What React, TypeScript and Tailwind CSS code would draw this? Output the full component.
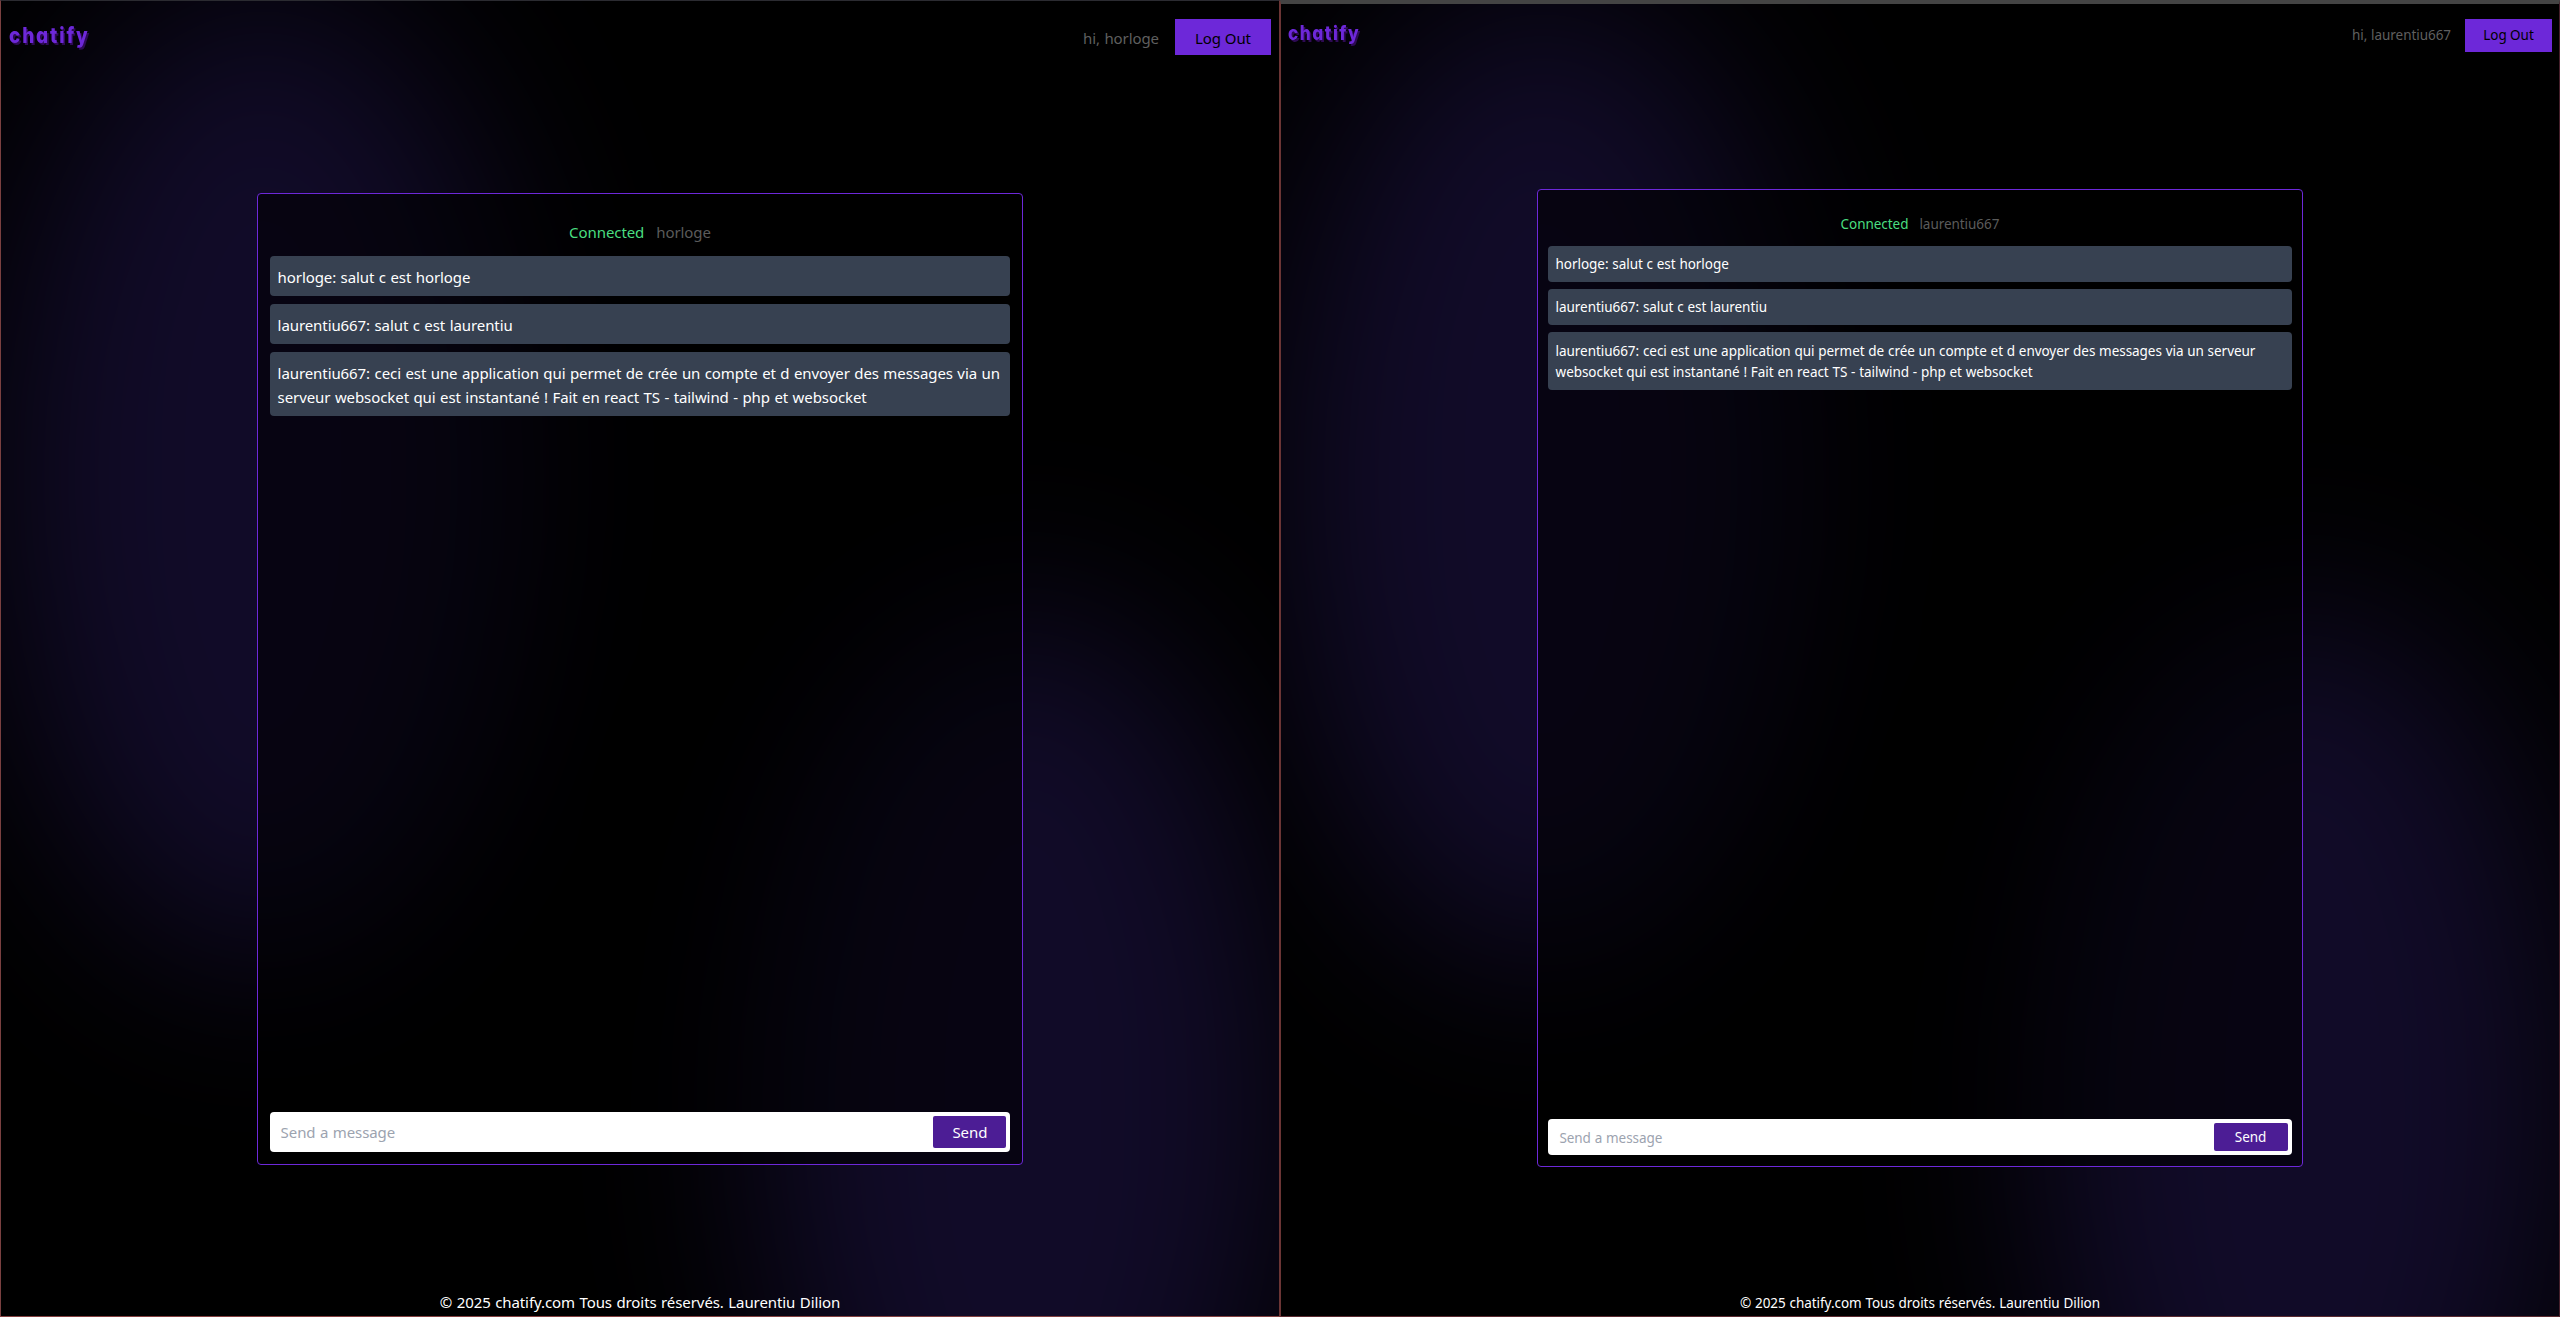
import React from "react";
import clsx from "clsx";

type Message = { author: string; text: string };

const messages: Message[] = [
  { author: "horloge", text: "salut c est horloge" },
  { author: "laurentiu667", text: "salut c est laurentiu" },
  {
    author: "laurentiu667",
    text: "ceci est une application qui permet de crée un compte et d envoyer des messages via un serveur websocket qui est instantané ! Fait en react TS - tailwind - php et websocket",
  },
];

// Two blurred ellipses that glow behind the page content.
function Glow() {
  return (
    <div className="pointer-events-none absolute inset-0 -z-10 overflow-hidden bg-black">
      <div className="absolute top-[-15px] left-0 h-[980px] w-[41%] rounded-[50%] bg-[#110b28] blur-[90px]" />
      <div className="absolute top-[605px] left-[59.5%] h-[1000px] w-[41%] rounded-[50%] bg-[#110b28] blur-[90px]" />
    </div>
  );
}

function ChatWindow({ user, compact = false }: { user: string; compact?: boolean }) {
  return (
    <section
      className={clsx(
        "relative isolate flex h-full w-[1280px] flex-col border",
        compact
          ? "border-t-4 border-t-[#444444] border-r-[#451f2b] border-b-[#5c2a30] border-l-[#6b3535] text-[13.5px] leading-[21.6px] tracking-[-0.05px] [word-spacing:0.35px]"
          : "border-t-[#2b2b31] border-r-[#6b3535] border-b-[#844040] border-l-[#7a4040] text-[15px] leading-6 tracking-[-0.08px] [word-spacing:0.65px]",
      )}
    >
      <Glow />
      <header
        className={clsx(
          "flex items-start justify-between",
          compact ? "h-[60px] pt-[15px] pr-[7px] pl-[7px]" : "h-[72px] px-2 pt-[18px]",
        )}
      >
        <h1
          className={clsx(
            "origin-left scale-x-[0.86] font-['Inter'] leading-8 font-extrabold text-[#6d28d9] [font-feature-settings:'cv11'] [text-shadow:2px_2px_0_#2e0a55]",
            compact ? "mt-[-2px] text-[20px] tracking-[1.8px]" : "text-[22px] tracking-[2.2px]",
          )}
        >
          chatify
        </h1>
        <div className="flex items-center">
          <span className={clsx("text-[#5f5f5f]", compact ? "mr-[14px]" : "mr-4 pt-px")}>hi, {user}</span>
          <button
            className={clsx("bg-[#6d28d9] pt-px text-black", compact ? "h-[33px] w-[87px]" : "h-9 w-24")}
          >
            Log Out
          </button>
        </div>
      </header>
      <main
        className={clsx(
          "mx-auto flex w-[60%] flex-col rounded border border-[#6d28d9] bg-black/55",
          compact ? "mt-[125px] h-[978px] px-[10.8px] pt-[24px] pb-[10.8px]" : "mt-[120px] h-[972px] px-3 pt-[26px] pb-3",
        )}
      >
        <p className={clsx("flex justify-center", compact ? "mb-[10.2px] gap-[11px]" : "mb-3 gap-3")}>
          <span className="text-[#4ade80]">Connected</span>
          <span className="text-[#5b5b5b]">{user}</span>
        </p>
        <ul className={clsx("flex flex-1 flex-col", compact ? "gap-[7.2px]" : "gap-2")}>
          {messages.map((m, i) => (
            <li
              key={i}
              className={clsx(
                "rounded bg-[#374151] text-white",
                compact ? "px-[7.2px] pt-[8.4px] pb-[6px]" : "px-2 pt-[9px] pb-[7px]",
              )}
            >
              {`${m.author}: ${m.text}`}
            </li>
          ))}
        </ul>
        <div className={clsx("flex items-center rounded bg-white pr-1 pl-[11px]", compact ? "h-9" : "h-10")}>
          <span className={clsx("flex-1 text-[#9ca3af]", compact && "pt-[3px]")}>Send a message</span>
          <button
            className={clsx("rounded-xs bg-[#4c1d95] text-white", compact ? "h-7 w-[74px] pt-[2px]" : "h-8 w-[73px]")}
          >
            Send
          </button>
        </div>
      </main>
      <footer className={clsx("mt-auto text-center text-white", compact ? "pb-px" : "pb-[2px]")}>
        © 2025 chatify.com Tous droits réservés. Laurentiu Dilion
      </footer>
    </section>
  );
}

export default function App() {
  return (
    <div className="flex h-[1317px] w-[2560px] overflow-hidden bg-black font-['Noto_Sans',sans-serif]">
      <ChatWindow user="horloge" />
      <ChatWindow user="laurentiu667" compact />
    </div>
  );
}
